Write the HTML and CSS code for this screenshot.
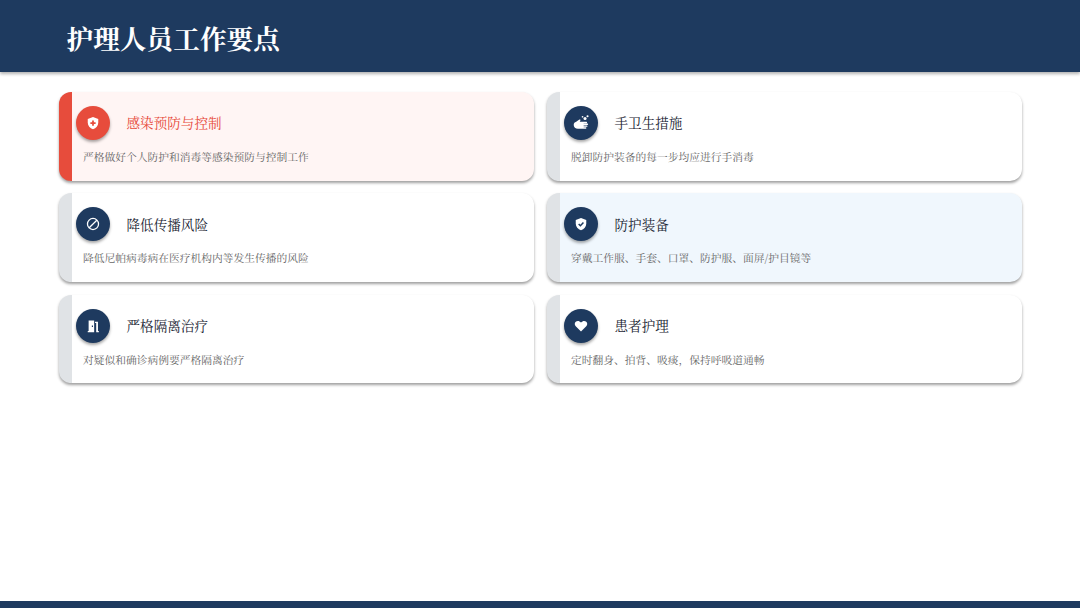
FILE: index.html
```html
<!DOCTYPE html>
<html lang="zh-CN">
<head>
<meta charset="utf-8">
<title>护理人员工作要点</title>
<link rel="stylesheet" href="styles.css">
</head>
<body>
<div class="slide">
  <header class="topbar"><h1 class="page-title">护理人员工作要点</h1></header>
  <main class="cards">
    <section class="card card-alert">
      <div class="card-head">
        <span class="badge"><svg class="ico ico-lg" viewBox="0 0 24 24"><path class="w" d="M12 1.500 3 5v6.500c0 5 3.700 9.300 9 11 5.300-1.700 9-6 9-11V5z"/><path class="c" d="M10.500 7.500h3v3h3v3h-3v3h-3v-3h-3v-3h3z"/></svg></span>
        <h2 class="card-title">感染预防与控制</h2>
      </div>
      <p class="card-text">严格做好个人防护和消毒等感染预防与控制工作</p>
    </section>
    <section class="card">
      <div class="card-head">
        <span class="badge"><svg class="ico ico-xl" viewBox="0 0 24 24"><path class="w" d="M1 14c0-2.500 1.500-4 3.500-4.500L9 6.500c1-.7 2 .4 1.400 1.400L9.500 9.500H19c1.200 0 1.200 2 0 2h-4v.6h5.500c1.200 0 1.200 2 0 2H15v.6h4.500c1.200 0 1.200 2 0 2H15v.6h3c1.200 0 1.200 2 0 2H7c-3.500 0-6-2-6-5.300z"/><circle class="w" cx="17" cy="5" r="2.200"/><circle class="w" cx="20.500" cy="1.800" r="1.500"/><circle class="w" cx="13.500" cy="2.500" r="1.200"/></svg></span>
        <h2 class="card-title">手卫生措施</h2>
      </div>
      <p class="card-text">脱卸防护装备的每一步均应进行手消毒</p>
    </section>
    <section class="card">
      <div class="card-head">
        <span class="badge"><svg class="ico ico-lg" viewBox="0 0 24 24"><circle class="s" cx="12" cy="12" r="9.500"/><path class="s" d="M5.500 18.500l13-13"/></svg></span>
        <h2 class="card-title">降低传播风险</h2>
      </div>
      <p class="card-text">降低尼帕病毒病在医疗机构内等发生传播的风险</p>
    </section>
    <section class="card card-info">
      <div class="card-head">
        <span class="badge"><svg class="ico ico-lg" viewBox="0 0 24 24"><path class="w" d="M12 1.500 3 5v6.500c0 5 3.700 9.300 9 11 5.300-1.700 9-6 9-11V5z"/><path class="k" d="m8 12 3 3 5.200-5.500"/></svg></span>
        <h2 class="card-title">防护装备</h2>
      </div>
      <p class="card-text">穿戴工作服、手套、口罩、防护服、面屏/护目镜等</p>
    </section>
    <section class="card">
      <div class="card-head">
        <span class="badge"><svg class="ico ico-lg" viewBox="0 0 24 24"><path class="w" fill-rule="evenodd" d="M3 20.500h1.500V2.500H14v20H3zM10 11v2.500h2V11zM15.500 4.500H20.500v16H22v2h-4.500V7h-2z"/></svg></span>
        <h2 class="card-title">严格隔离治疗</h2>
      </div>
      <p class="card-text">对疑似和确诊病例要严格隔离治疗</p>
    </section>
    <section class="card">
      <div class="card-head">
        <span class="badge"><svg class="ico ico-lg" viewBox="0 0 24 24"><path class="w" d="M12 21.500 3 12.500C.5 10 .8 6 3.500 4.200 6 2.500 9.500 3 12 6.200 14.500 3 18 2.500 20.500 4.200 23.200 6 23.500 10 21 12.500z"/></svg></span>
        <h2 class="card-title">患者护理</h2>
      </div>
      <p class="card-text">定时翻身、拍背、吸痰，保持呼吸道通畅</p>
    </section>
  </main>
  <footer class="bottombar"></footer>
</div>
</body>
</html>
```
FILE: styles.css
```css
* { box-sizing: border-box; }
html, body { margin: 0; padding: 0; }
body { background: #fff; font-family: "Noto Serif CJK SC", "Liberation Serif", "Noto Sans CJK SC", serif; }
.slide { width: 1080px; height: 608px; display: flex; flex-direction: column; overflow: hidden; }
.topbar { height: 72px; flex: none; background: #1e3a5f; box-shadow: 0 2px 3px rgba(0,0,0,.3); display: flex; align-items: center; padding: 4px 0 0 66.500px; }
.page-title { margin: 0; color: #fff; font-size: 26.700px; font-weight: 700; line-height: 1; }
.cards { flex: 1; display: grid; grid-template-columns: 475.500px 475.500px; grid-auto-rows: 88.800px; gap: 12.500px; padding: 20px 0 0 58.500px; align-content: start; }
.card { background: #fff; border-left: 13px solid #e0e3e6; border-radius: 12px; box-shadow: 0 2px 3px rgba(0,0,0,.38); padding: 14px 12px 0 4.500px; }
.card-alert { background: #fff5f4; border-left-color: #e74c3c; }
.card-info { background: #f0f7fd; }
.card-head { display: flex; align-items: center; gap: 16.500px; height: 34px; }
.badge { width: 34px; height: 34px; flex: none; border-radius: 50%; background: #1e3a5f; box-shadow: 0 2px 3px rgba(0,0,0,.35); display: flex; align-items: center; justify-content: center; }
.card-alert .badge { background: #e74c3c; }
.ico { width: 13px; height: 13px; }
.ico-lg { width: 14px; height: 14px; }
.ico-xl { width: 17px; height: 17px; }
.w { fill: #fff; }
.c { fill: #e74c3c; }
.s { fill: none; stroke: #fff; stroke-width: 2.200; }
.k { fill: none; stroke: #1e3a5f; stroke-width: 2.600; }
.card-title { margin: 0; font-size: 13.600px; font-weight: 400; line-height: 1; color: #1a2533; }
.card-alert .card-title { color: #e74c3c; }
.card-text { margin: 10px 0 0 7px; font-size: 10.760px; line-height: 13px; color: #666; }
.bottombar { height: 7px; flex: none; background: #1e3a5f; }
```
